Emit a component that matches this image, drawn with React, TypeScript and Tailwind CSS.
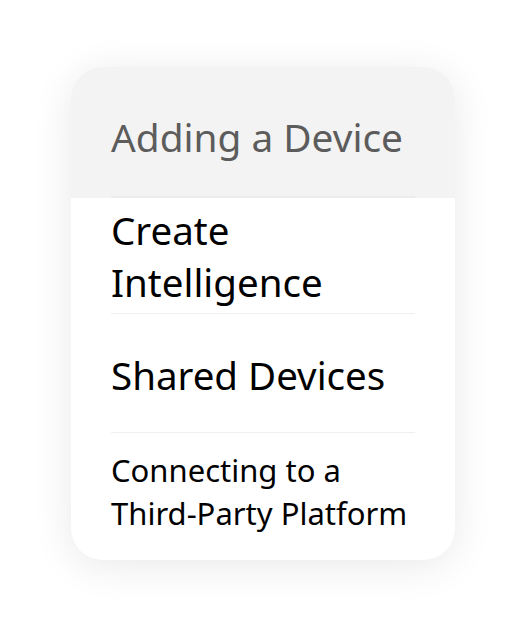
export default function App() {
  const font = { fontFamily: '"Noto Sans", "Liberation Sans", sans-serif' };

  return (
    <div className="min-h-[636px] w-full bg-white flex pl-[71px] pt-[67px]" style={font}>
      <div className="w-[384px] h-[493px] rounded-[32px] bg-white overflow-hidden shadow-[0_6px_40px_rgba(0,0,0,0.09)] flex flex-col">
        {/* header */}
        <div className="h-[131px] bg-[#f3f3f3] px-[40px] flex flex-col">
          <div className="flex-1 flex items-center pt-[10px]">
            <span className="text-[38.8px] leading-[48px] text-[#5c5c5c]">Adding a Device</span>
          </div>
          <div className="h-[2px] bg-[#ececec]" />
        </div>

        <div className="px-[40px] flex flex-col flex-1">
          <div className="h-[116px] flex items-center border-b border-[#efefef]">
            <span className="text-[38.5px] leading-[52px] text-black">
              Create
              <br />
              Intelligence
            </span>
          </div>
          <div className="h-[119px] flex items-center border-b border-[#efefef] pt-[4px]">
            <span className="text-[38.5px] leading-[52px] text-black">Shared Devices</span>
          </div>
          <div className="flex-1 flex items-center pb-[10px]">
            <span className="text-[31px] leading-[43px] text-black whitespace-nowrap">
              Connecting to a
              <br />
              Third-Party Platform
            </span>
          </div>
        </div>
      </div>
    </div>
  );
}
